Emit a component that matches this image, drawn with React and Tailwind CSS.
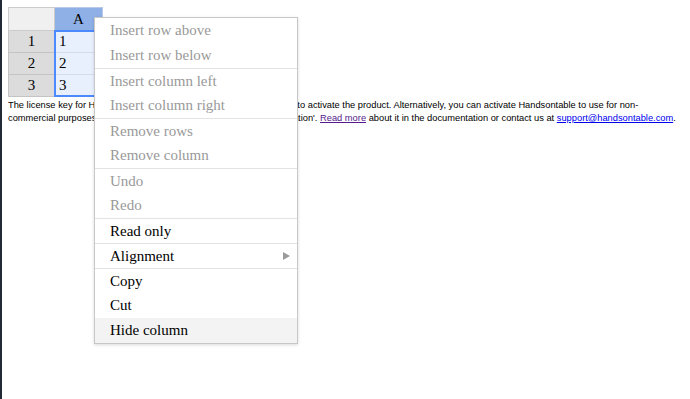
import React from 'react';

const serif = { fontFamily: '"Liberation Serif", "Times New Roman", serif' };

const groups = [
  [
    { label: 'Insert row above', disabled: true },
    { label: 'Insert row below', disabled: true },
  ],
  [
    { label: 'Insert column left', disabled: true },
    { label: 'Insert column right', disabled: true },
  ],
  [
    { label: 'Remove rows', disabled: true },
    { label: 'Remove column', disabled: true },
  ],
  [
    { label: 'Undo', disabled: true },
    { label: 'Redo', disabled: true },
  ],
  [{ label: 'Read only' }],
  [{ label: 'Alignment', submenu: true }],
  [{ label: 'Copy' }, { label: 'Cut' }, { label: 'Hide column', active: true }],
];

function ContextMenu() {
  return (
    <div
      className="absolute left-[94px] top-[17px] w-[204px] bg-white border border-[#c8c8c8] shadow-[0_1px_3px_rgba(0,0,0,0.15)]"
      style={serif}
    >
      {groups.map((group, gi) => (
        <div key={gi} className={gi > 0 ? 'border-t border-[#e3e3e3]' : ''}>
          {group.map((item, ii) => (
            <div
              key={item.label}
              className={
                'flex items-center justify-between pl-[15px] pr-[7px] text-[15px] ' +
                (gi > 0 && ii === 0 ? 'h-[24px] ' : 'h-[25px] ') +
                (item.disabled ? 'text-[#999999] ' : 'text-black ') +
                (item.active ? 'bg-[#f3f3f3]' : '')
              }
            >
              <span>{item.label}</span>
              {item.submenu && (
                <svg width="7" height="8" viewBox="0 0 7 8">
                  <path d="M0 0 L7 4 L0 8 Z" fill="#9a9a9a" />
                </svg>
              )}
            </div>
          ))}
        </div>
      ))}
    </div>
  );
}

function Grid() {
  const rows = ['1', '2', '3'];
  return (
    <div className="relative w-[95px] text-[15px]" style={serif}>
      <div className="flex h-[24px]">
        <div className="w-[47px] bg-[#f0f0f0] border border-[#cccccc]" />
        <div className="w-[48px] bg-[#8eb0e7] border-y border-r border-[#b8c8e6] flex items-center justify-center">
          A
        </div>
      </div>
      {rows.map((r) => (
        <div key={r} className="flex h-[22px]">
          <div className="w-[47px] bg-[#dcdcdc] border-x border-b border-[#c4c4c4] flex items-center justify-center">
            {r}
          </div>
          <div className="w-[48px] bg-[#e8f0fe] border-b border-r border-[#d4dcea] flex items-center pl-[4px]">
            {r}
          </div>
        </div>
      ))}
      <div className="absolute left-[46px] top-[23px] w-[49px] h-[67px] border-2 border-[#4b89ff]" />
    </div>
  );
}

export default function App() {
  return (
    <div className="relative flex w-[690px] h-[399px] bg-white overflow-hidden">
      <div className="w-[2px] h-full bg-[#222b35]" />
      <div className="pl-[6px] pt-[7px]">
        <Grid />
        <p
          className="mt-[2px] w-[675px] text-[9.3px] leading-[13px] text-black"
          style={{ fontFamily: '"Liberation Sans", Arial, sans-serif' }}
        >
          The license key for Handsontable is missing. Use your purchased key to activate the product. Alternatively,
          you can activate Handsontable to use for non-commercial purposes by passing the key:
          'non-commercial-and-evaluation'.{' '}
          <a href="#" className="underline text-[#551a8b]">
            Read more
          </a>{' '}
          about it in the documentation or contact us at{' '}
          <a href="#" className="underline text-[#0000ee]">
            support@handsontable.com
          </a>
          .
        </p>
      </div>
      <ContextMenu />
    </div>
  );
}
